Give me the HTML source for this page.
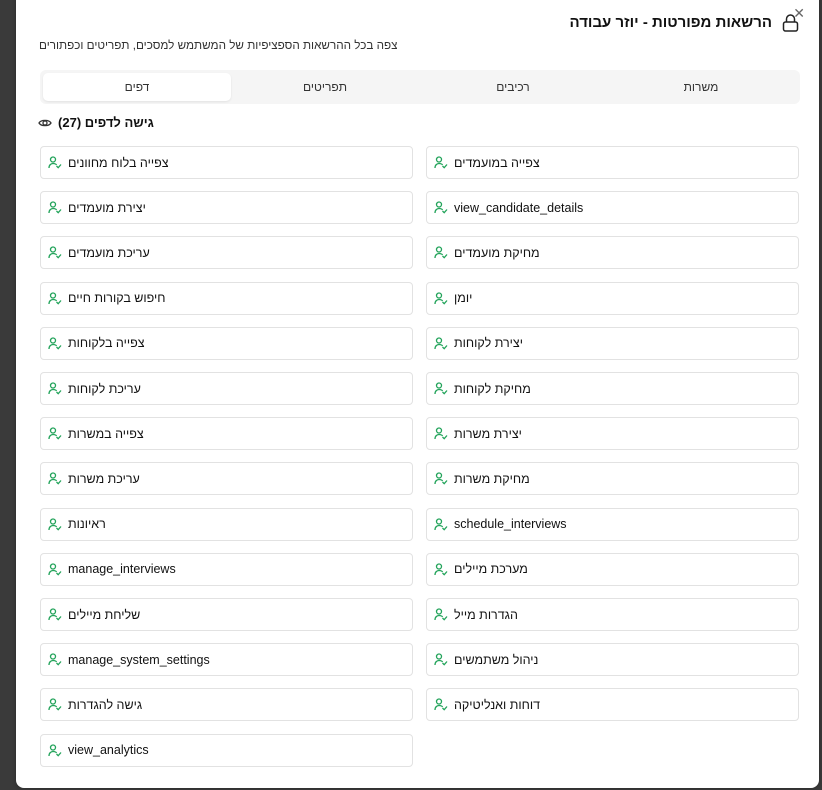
<!DOCTYPE html>
<html><head><meta charset="utf-8"><style>
body{margin:0;width:822px;height:790px;overflow:hidden;background:#3a3a3a;font-family:"Liberation Sans","Noto Sans CJK SC",sans-serif;position:relative}
.modal{position:absolute;left:16px;top:-8px;width:803px;height:796px;background:#fff;border-radius:8px;box-shadow:0 0 4px rgba(0,0,0,.3)}
.t{position:absolute;right:47px;top:22px;font-size:15px;font-weight:bold;color:#111;direction:rtl}
.lock{position:absolute;right:20px;top:22px}
.x{position:absolute;right:14px;top:13px;font-size:14px;color:#666}
.sub{position:absolute;left:23px;top:47px;font-size:11.7px;color:#333;direction:rtl}
.tabs{position:absolute;left:24px;top:78px;width:760px;height:34px;background:#f5f5f5;border-radius:6px}
.tab{position:absolute;top:0;height:34px;line-height:34px;font-size:12px;color:#333;text-align:center;width:188px}
.tab.a{background:#fff;border-radius:5px;top:3px;height:28px;line-height:28px;left:3px;box-shadow:0 1px 2px rgba(0,0,0,.08)}
.h{position:absolute;left:22px;top:123px;font-size:13px;font-weight:bold;color:#111;display:flex;align-items:center;gap:6px}
.c{position:absolute;width:373px;height:33px;border:1px solid #e2e2e2;border-radius:4px;box-sizing:border-box;font-size:12.5px;color:#111;display:flex;align-items:center}
.c svg{margin:0 6px 0 7px}
</style></head><body>
<div class="modal">
<div class="x">✕</div>
<svg class="lock" width="17" height="18" viewBox="0 0 17 18" fill="none" stroke="#222" stroke-width="1.5"><rect x="1.5" y="8" width="14" height="9" rx="2"/><path d="M4.5 8V5a4 4 0 0 1 8 0V8"/></svg>
<div class="t">הרשאות מפורטות - יוזר עבודה</div>
<div class="sub">צפה בכל ההרשאות הספציפיות של המשתמש למסכים, תפריטים וכפתורים</div>
<div class="tabs">
<div class="tab a">דפים</div>
<div class="tab" style="left:191px">תפריטים</div>
<div class="tab" style="left:379px">רכיבים</div>
<div class="tab" style="left:567px">משרות</div>
</div>
<div class="h"><svg width="14" height="10" viewBox="0 0 14 10" fill="none" stroke="#333" stroke-width="1.3"><path d="M1 5C3 1.5 11 1.5 13 5C11 8.5 3 8.5 1 5Z"/><circle cx="7" cy="5" r="2"/></svg><span style="direction:rtl">גישה לדפים (27)</span></div>
</div>
<div id="g"></div>
<script>
var L=["צפייה בלוח מחוונים","יצירת מועמדים","עריכת מועמדים","חיפוש בקורות חיים","צפייה בלקוחות","עריכת לקוחות","צפייה במשרות","עריכת משרות","ראיונות","manage_interviews","שליחת מיילים","manage_system_settings","גישה להגדרות","view_analytics"];
var R=["צפייה במועמדים","view_candidate_details","מחיקת מועמדים","יומן","יצירת לקוחות","מחיקת לקוחות","יצירת משרות","מחיקת משרות","schedule_interviews","מערכת מיילים","הגדרות מייל","ניהול משתמשים","דוחות ואנליטיקה"];
var ic='<svg width="14" height="13" viewBox="0 0 14 13" fill="none" stroke="#22a35a" stroke-width="1.3"><circle cx="5" cy="3.5" r="2.5"/><path d="M1 12c0-3 2-4.5 4-4.5s3 .6 3.6 1.5"/><path d="M8.5 10l1.7 1.7L13 8.5"/></svg>';
var h='';
function add(a,x){a.forEach(function(t,i){h+='<div class="c" style="left:'+x+'px;top:'+(146+i*45.2)+'px">'+ic+'<span>'+t+'</span></div>'})}
add(L,40);add(R,426);
document.getElementById('g').innerHTML=h;
</script>
</body></html>
